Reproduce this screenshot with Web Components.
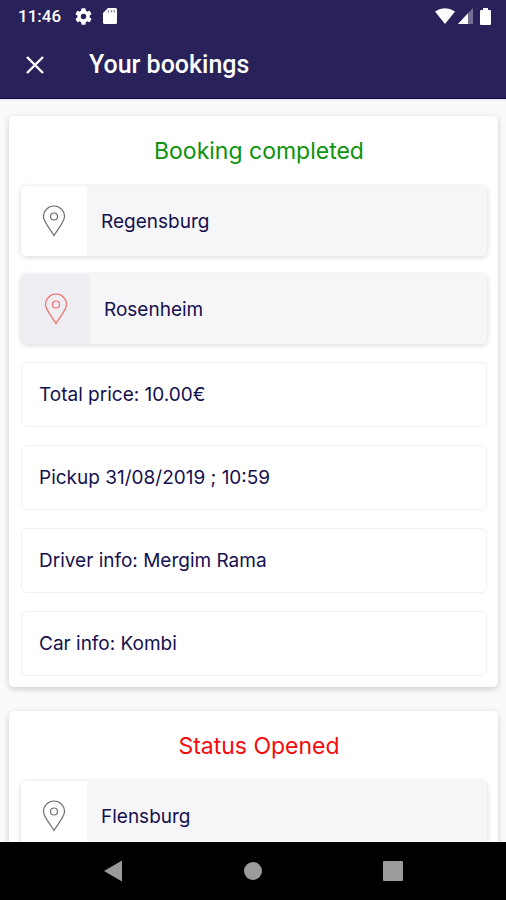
<!DOCTYPE html>
<html lang="en">
<head>
<meta charset="utf-8">
<meta name="viewport" content="width=device-width, initial-scale=1">
<title>Your bookings</title>
<style>
  body { margin: 0; font-family: Inter, "Liberation Sans", sans-serif; color: #15104f; background: #fafafa; }
</style>
</head>
<body>
<bookings-app>
  <status-bar slot="top" time="11:46"></status-bar>
  <app-bar slot="top">Your bookings</app-bar>
  <booking-card status="completed">
    <span slot="title">Booking completed</span>
    <place-row>Regensburg</place-row>
    <place-row kind="destination">Rosenheim</place-row>
    <detail-row>Total price: 10.00€</detail-row>
    <detail-row>Pickup 31/08/2019 ; 10:59</detail-row>
    <detail-row>Driver info: Mergim Rama</detail-row>
    <detail-row>Car info: Kombi</detail-row>
  </booking-card>
  <booking-card status="opened">
    <span slot="title">Status Opened</span>
    <place-row>Flensburg</place-row>
  </booking-card>
  <system-nav slot="bottom"></system-nav>
</bookings-app>

<script>
  const define = (name, html, setup) => {
    const template = document.createElement('template');
    template.innerHTML = html;
    customElements.define(name, class extends HTMLElement {
      constructor() {
        super();
        this.attachShadow({ mode: 'open' }).append(template.content.cloneNode(true));
      }
      connectedCallback() { if (setup) setup(this, this.shadowRoot); }
    });
  };

  define('bookings-app', `
    <style>
      :host { display: flex; flex-direction: column; height: 100vh; }
      header { flex: none; background: #29215a; border-bottom: 1px solid #0d0540; }
      main { flex: 1; min-height: 0; overflow: hidden; display: flex; flex-direction: column; gap: 24px; padding: 17px 8px 0 9px; box-shadow: inset 0 3px 3px -2px #00000018; }
      footer { flex: none; }
    </style>
    <header><slot name="top"></slot></header>
    <main><slot></slot></main>
    <footer><slot name="bottom"></slot></footer>
  `);

  define('status-bar', `
    <style>
      :host { display: flex; align-items: center; height: 32px; padding: 0 15px 0 18px; color: #fff; font: 500 17px/32px Roboto, sans-serif; }
      svg { display: block; }
      .gear { margin-left: 14px; }
      .card { margin-left: 11px; }
      .right { display: flex; align-items: center; gap: 3px; margin-left: auto; }
      .battery { margin-left: 4px; }
    </style>
    <span class="time"></span>
    <svg class="gear" width="17" height="17" viewBox="2 2 20 20" fill="#fff"><path d="M19.14 12.94c.04-.3.06-.61.06-.94s-.02-.64-.07-.94l2.03-1.58a.5.5 0 0 0 .12-.61l-1.92-3.32a.49.49 0 0 0-.59-.22l-2.39.96a7 7 0 0 0-1.62-.94l-.36-2.54a.48.48 0 0 0-.48-.41h-3.84a.47.47 0 0 0-.47.41l-.36 2.54c-.59.24-1.13.57-1.62.94l-2.39-.96a.48.48 0 0 0-.59.22L2.74 8.87a.47.47 0 0 0 .12.61l2.03 1.58a6 6 0 0 0-.02 1.88l-2.03 1.58a.5.5 0 0 0-.12.61l1.92 3.32c.12.22.37.29.59.22l2.39-.96c.5.38 1.03.7 1.62.94l.36 2.54c.05.24.24.41.48.41h3.84c.24 0 .44-.17.47-.41l.36-2.54a7 7 0 0 0 1.62-.94l2.39.96c.22.08.47 0 .59-.22l1.92-3.32a.47.47 0 0 0-.12-.61zM12 15.2a3.2 3.2 0 1 1 0-6.4 3.2 3.2 0 0 1 0 6.4z"/></svg>
    <svg class="card" width="14" height="16" viewBox="0 0 14 16"><path d="M5 0h7.500Q14 0 14 1.500v13q0 1.500-1.500 1.500h-11Q0 16 0 14.500V5z" fill="#fff"/><path d="M5.500 2v2.500M8.500 2v2.500M11.300 2v2.500" stroke="#29215a" stroke-width="1.300" opacity=".5"/></svg>
    <span class="right">
      <svg width="20" height="16" viewBox="0 0 20 16"><path d="M0 3.500Q10-3 20 3.500L10 16z" fill="#fff"/></svg>
      <svg width="15" height="16" viewBox="0 0 15 16"><path d="M15 0v16H0z" fill="#fff" opacity=".35"/><path d="M10 5.300V16H0z" fill="#fff"/></svg>
      <svg class="battery" width="11" height="17" viewBox="0 0 11 17"><path d="M3 0h5v2h2q1 0 1 1v13q0 1-1 1H1q-1 0-1-1V3q0-1 1-1h2z" fill="#fff"/></svg>
    </span>
  `, (host, root) => { root.querySelector('.time').textContent = host.getAttribute('time'); });

  define('app-bar', `
    <style>
      :host { display: flex; align-items: center; gap: 37px; height: 66px; padding: 0 18px; color: #fff; }
      button { display: grid; place-items: center; width: 34px; height: 34px; padding: 0; border: 0; background: none; color: inherit; }
      h1 { margin: 0; font: 500 25px/32px Roboto, sans-serif; }
    </style>
    <button type="button" aria-label="Close"><svg width="18" height="18" viewBox="0 0 18 18" fill="none" stroke="currentColor" stroke-width="2.400"><path d="M1 1l16 16M17 1L1 17"/></svg></button>
    <h1><slot></slot></h1>
  `);

  define('booking-card', `
    <style>
      :host { display: flex; flex: none; flex-direction: column; gap: 18px; padding: 0 11px 11px 12px; background: #fff; border-radius: 5px; box-shadow: 0 2px 6px #00000030; }
      h2 { margin: 0 0 -18px; padding-left: 10px; font-size: 23px; font-weight: 400; line-height: 70px; text-align: center; color: #0b930b; }
      :host([status="opened"]) h2 { color: #f40b0b; }
    </style>
    <h2><slot name="title"></slot></h2>
    <slot></slot>
  `);

  define('place-row', `
    <style>
      :host { display: flex; align-items: stretch; height: 70px; border-radius: 5px; background: #f6f6f8; box-shadow: 0 1px 5px #0000002c; overflow: hidden; font-size: 19px; line-height: 72px; }
      .icon { display: grid; place-items: center; width: 66px; background: #fff; color: #6e6e78; }
      :host([kind="destination"]) .icon { width: 69px; background: #eeeef2; color: #f56a6a; }
      .name { padding: 0 14px; }
    </style>
    <span class="icon"><svg width="24" height="32" viewBox="0 0 24 32" fill="none" stroke="currentColor" stroke-width="1.200"><path d="M12 30.500C9 25 1.500 17 1.500 11.500a10.500 10.500 0 0 1 21 0C22.500 17 15 25 12 30.500z"/><circle cx="12" cy="11.500" r="3.500"/></svg></span>
    <span class="name"><slot></slot></span>
  `);

  define('detail-row', `
    <style>
      :host { display: block; box-sizing: border-box; height: 65px; padding: 0 17px; border: 1px solid #f0f0f1; border-radius: 6px; font-size: 19px; line-height: 63px; }
    </style>
    <slot></slot>
  `);

  define('system-nav', `
    <style>
      :host { display: block; background: #000; }
      nav { display: flex; justify-content: center; gap: 92px; height: 58px; }
      button { display: grid; place-items: center; width: 48px; padding: 0; border: 0; background: none; }
    </style>
    <nav aria-label="System">
      <button type="button" aria-label="Back"><svg width="20" height="22" viewBox="0 0 20 22" fill="#9b9b9b"><path d="M19 .5v21L1 11z"/></svg></button>
      <button type="button" aria-label="Home"><svg width="20" height="20" viewBox="0 0 20 20" fill="#9b9b9b"><circle cx="10" cy="10" r="9"/></svg></button>
      <button type="button" aria-label="Recent apps"><svg width="20" height="20" viewBox="0 0 20 20" fill="#9b9b9b"><rect width="20" height="20" rx="1"/></svg></button>
    </nav>
  `);
</script>
</body>
</html>
